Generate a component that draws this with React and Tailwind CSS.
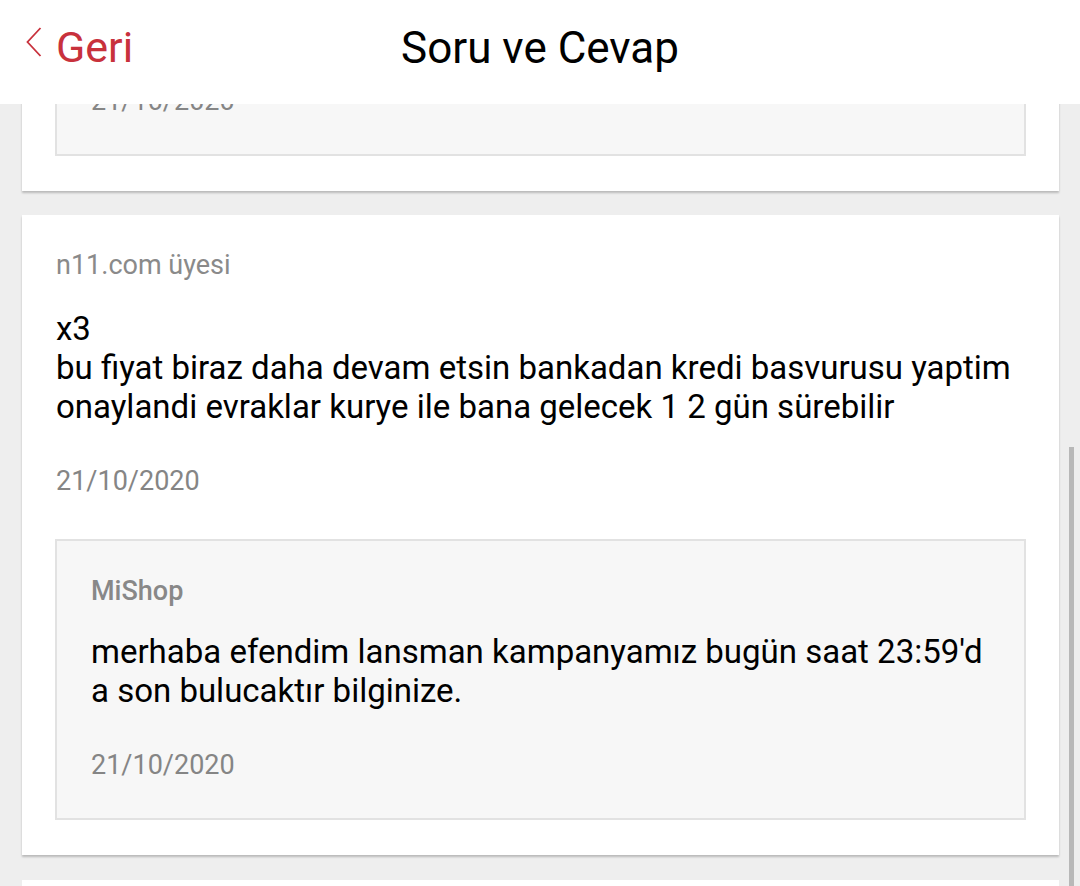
import React from "react";

const font = { fontFamily: "Roboto, 'Noto Sans', 'Liberation Sans', sans-serif" };

function Chevron() {
  return (
    <svg width="16" height="30" viewBox="0 0 16 30" className="shrink-0">
      <polyline points="14.5,1 1.5,15 14.5,29" fill="none" stroke="#c8313c" strokeWidth="1.8" strokeLinejoin="miter" />
    </svg>
  );
}

export default function App() {
  return (
    <div className="relative h-[886px] w-[1080px] overflow-hidden bg-[#eeeeee] flex flex-col" style={font}>
      {/* Header */}
      <header className="relative z-10 h-[104px] shrink-0 bg-white grid grid-cols-[1fr_auto_1fr]">
        <div className="flex items-start pl-[26px] pt-[27px] gap-[14px]">
          <Chevron />
          <span className="text-[43px] leading-none text-[#c8313c] -mt-[1px]">Geri</span>
        </div>
        <h1 className="pt-[26px] text-[44px] leading-none text-black font-normal">Soru ve Cevap</h1>
        <div />
      </header>

      {/* Content */}
      <main className="flex-1 overflow-hidden">
        <div className="-mt-[19px] flex flex-col gap-6 pl-[22px] pr-[21px]">
          {/* Card 1 (partially scrolled away) */}
          <section className="bg-white px-[33px] pb-[35px] shadow-[0_2px_2px_rgba(0,0,0,0.22)]">
            <div className="bg-[#f7f7f7] border-2 border-t-0 border-[#e2e2e2] px-[34px] pb-[37px]">
              <div className="text-[27px] leading-[32px] text-[#858585]">21/10/2020</div>
            </div>
          </section>

          {/* Card 2 */}
          <section className="bg-white pb-[35px] shadow-[0_2px_2px_rgba(0,0,0,0.22)]">
            <div className="px-[34px] pt-[34px]">
              <div className="text-[27px] leading-[32px] text-[#8a8a8a]">n11.com üyesi</div>
              <div className="mt-[28px] text-[33px] leading-[39px] text-black">
                <div className="whitespace-nowrap">x3</div>
                <div className="whitespace-nowrap">bu fiyat biraz daha devam etsin bankadan kredi basvurusu yaptim</div>
                <div className="whitespace-nowrap">onaylandi evraklar kurye ile bana gelecek 1 2 gün sürebilir</div>
              </div>
              <div className="mt-[39px] text-[27px] leading-[32px] text-[#858585]">21/10/2020</div>
            </div>
            <div className="mx-[33px] mt-[42px] bg-[#f7f7f7] border-2 border-[#e2e2e2] px-[34px] pt-[34px] pb-[37px]">
              <div className="text-[27px] leading-[32px] font-medium text-[#888888]">MiShop</div>
              <div className="mt-[25px] text-[33px] leading-[39px] text-black">
                <div className="whitespace-nowrap">merhaba efendim lansman kampanyamız bugün saat 23:59'd</div>
                <div className="whitespace-nowrap">a son bulucaktır bilginize.</div>
              </div>
              <div className="mt-[39px] text-[27px] leading-[32px] text-[#858585]">21/10/2020</div>
            </div>
          </section>

          {/* Card 3 (top edge) */}
          <section className="mt-[1px] h-[200px] bg-white" />
        </div>
      </main>

      {/* Scrollbar */}
      <div className="absolute right-[6px] top-[447px] bottom-0 w-[5px] bg-[#b8b8b8]" />
    </div>
  );
}
